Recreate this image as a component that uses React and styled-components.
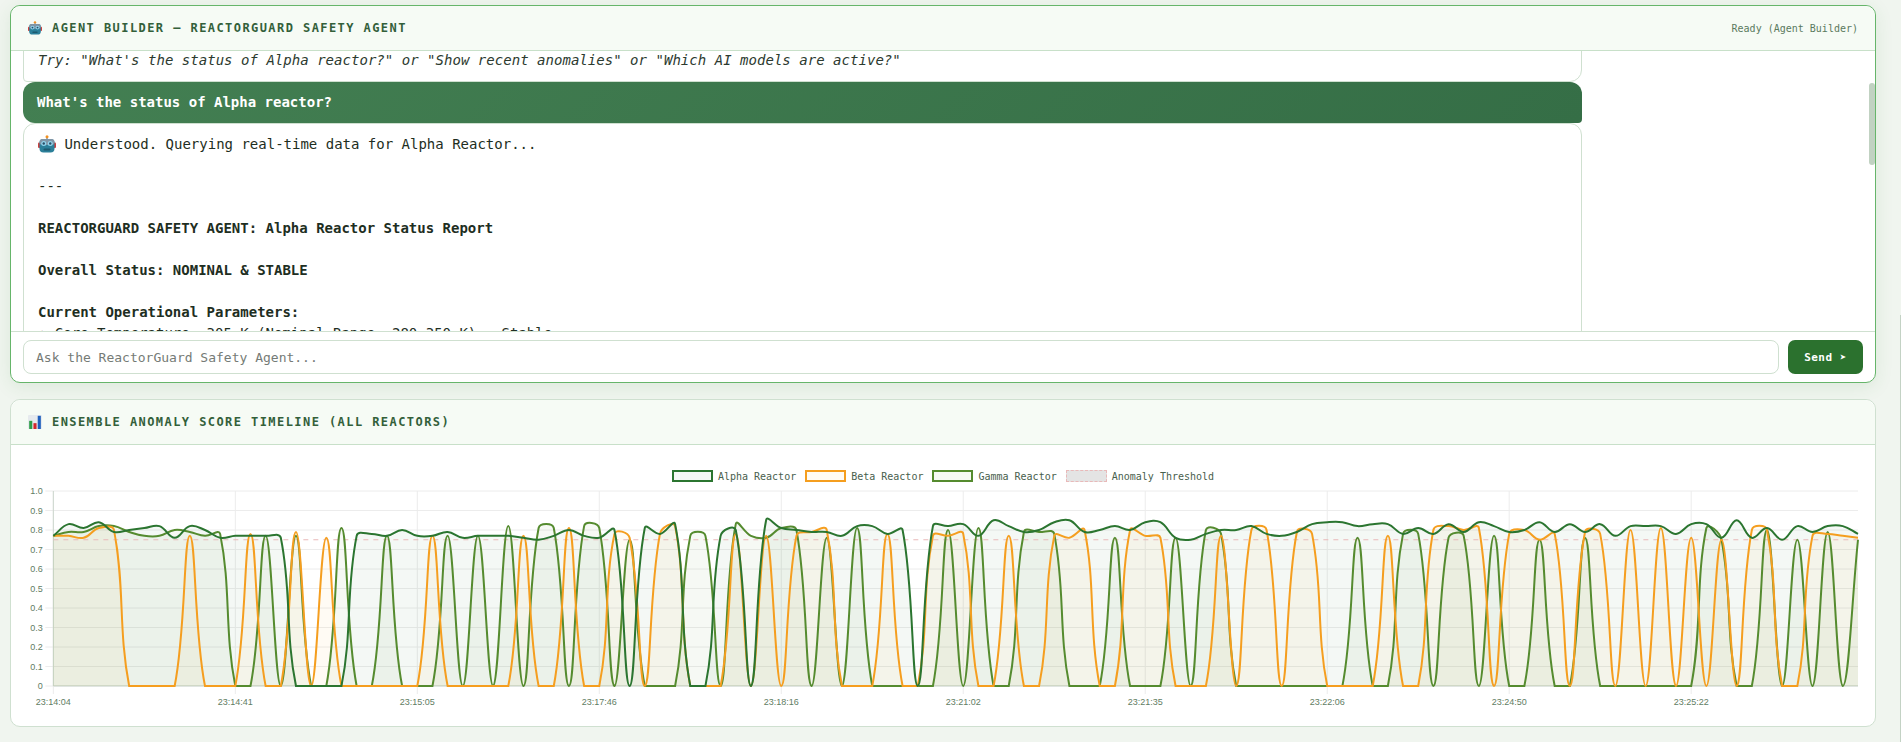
import React, { useLayoutEffect, useRef } from "react";
import styled, { createGlobalStyle } from "styled-components";

const MONO = '"DejaVu Sans Mono", "Liberation Mono", monospace';

const GlobalStyle = createGlobalStyle`
  html, body {
    margin: 0;
    height: 100%;
    overflow: hidden;
    background: #f0f5ef;
    font-family: ${MONO};
  }
  * {
    box-sizing: border-box;
  }
`;

const Page = styled.div`
  display: flex;
  flex-direction: column;
  gap: 16px;
  height: 742px;
  padding: 5px 25px 0 10px;
`;

const Panel = styled.section`
  display: flex;
  flex-direction: column;
  position: relative;
  background: #fff;
  border: 1px solid ${({ $active }) => ($active ? "#66b56a" : "#cfe0d0")};
  border-radius: 10px;
  overflow: hidden;
  box-shadow: ${({ $active }) => ($active ? "0 4px 18px rgba(46, 125, 50, 0.1)" : "none")};
`;

const AgentPanel = styled(Panel)`
  height: 378px;
  overflow: visible;
`;

const PanelHeader = styled.header`
  display: flex;
  align-items: center;
  justify-content: space-between;
  flex: none;
  height: 45px;
  padding: 0 17px;
  background: #f6fbf5;
  border-bottom: 1px solid #c8e0c9;
  border-radius: 10px 10px 0 0;
`;

const PanelTitle = styled.h2`
  display: flex;
  align-items: center;
  gap: 10px;
  margin: 0;
  color: #33603a;
  font-size: 12px;
  font-weight: 700;
  letter-spacing: 1.43px;
  text-transform: uppercase;
`;

const Status = styled.span`
  color: #5a7a5e;
  font-size: 10px;
`;

const ChatViewport = styled.div`
  flex: none;
  height: 280px;
  padding: 0 12px;
  overflow: hidden;
`;

const Bubble = styled.div`
  max-width: 1559px;
  padding: 10px 14px;
  font-size: 14px;
  line-height: 21px;
  white-space: pre-wrap;
`;

const AgentBubble = styled(Bubble)`
  background: #fff;
  color: #1e2e22;
  border: 1px solid #cfe0d0;
  border-radius: 12px 12px 12px 4px;
`;

const UserBubble = styled(Bubble)`
  background: linear-gradient(135deg, #437f52, #356e46);
  color: #fff;
  border-radius: 12px 12px 4px 12px;
  font-weight: 700;
`;

const Hint = styled.em`
  color: #2c3a2f;
  letter-spacing: 0.03px;
`;

const Emoji = styled.svg`
  display: inline-block;
  vertical-align: -4px;
  flex: none;
`;

const ScrollThumb = styled.div`
  position: absolute;
  top: 77px;
  right: 0;
  width: 6px;
  height: 82px;
  background: #c1d2c2;
  border-radius: 3px;
`;

const Composer = styled.form`
  display: flex;
  flex: 1;
  align-items: center;
  gap: 9px;
  padding: 0 12px;
  border-top: 1px solid #cfe0d0;
`;

const ChatInput = styled.input`
  flex: 1;
  height: 34px;
  padding: 0 12px;
  border: 1px solid #cfe0d0;
  border-radius: 8px;
  background: #fff;
  font-family: inherit;
  font-size: 13px;
  &::placeholder {
    color: #757b76;
  }
`;

const SendButton = styled.button`
  flex: none;
  width: 75px;
  height: 34px;
  border: 0;
  border-radius: 7px;
  background: #2b712e;
  color: #fff;
  font-family: inherit;
  font-size: 11px;
  font-weight: 700;
  letter-spacing: 0.5px;
`;

const ChartPanel = styled(Panel)`
  height: 328px;
`;

const ChartBody = styled.div`
  display: flex;
  flex-direction: column;
  padding-top: 25px;
`;

const Legend = styled.div`
  display: flex;
  justify-content: center;
  gap: 9px;
  height: 12px;
  margin-bottom: 4px;
`;

const LegendItem = styled.div`
  display: flex;
  align-items: center;
  gap: 5px;
  color: #48604d;
  font-size: 10px;
`;

const LegendBox = styled.span`
  width: 41px;
  height: 12px;
  border: ${({ $dashed }) => ($dashed ? "1px dashed" : "2px solid")} ${({ $line }) => $line};
  background: ${({ $fill }) => $fill};
`;

const PageScrollbar = styled.div`
  position: fixed;
  top: 315px;
  right: 0;
  bottom: 0;
  width: 1px;
  background: #c3d2c4;
`;

const PLOT = { left: 53.33, right: 1858, top: 491, bottom: 686 };
const STEP = (PLOT.right - PLOT.left) / 119;

const ALPHA = [
  0.77, 0.83, 0.81, 0.84, 0.79, 0.8, 0.81, 0.82, 0.76, 0.82, 0.8, 0.76, 0.77, 0.77, 0.77, 0.76, 0, 0, 0, 0,
  0.77, 0.78, 0.77, 0.8, 0.77, 0.77, 0.79, 0.76, 0.77, 0.77, 0.77, 0.76, 0.75, 0.77, 0.8, 0.77, 0.76, 0.8, 0, 0.81,
  0.78, 0.83, 0, 0, 0.77, 0.8, 0, 0.85, 0.81, 0.8, 0.79, 0.79, 0.77, 0.82, 0.82, 0.78, 0.8, 0, 0.82, 0.82,
  0.83, 0.77, 0.85, 0.82, 0.79, 0.8, 0.84, 0.85, 0.79, 0.8, 0.82, 0.8, 0.84, 0.84, 0.76, 0.75, 0.78, 0.8, 0.8, 0.82,
  0.78, 0.77, 0.79, 0.83, 0.84, 0.84, 0.82, 0.83, 0.83, 0.78, 0.81, 0.78, 0.83, 0.79, 0.84, 0.82, 0.79, 0.8, 0.84, 0.79,
  0.83, 0.79, 0.83, 0.77, 0.82, 0.82, 0.82, 0.78, 0.83, 0.83, 0.76, 0.85, 0.76, 0.81, 0.75, 0.82, 0.79, 0.82, 0.82, 0.78,
];

const BETA = [
  0.77, 0.77, 0.76, 0.81, 0.8, 0, 0, 0, 0, 0.77, 0, 0, 0, 0.78, 0, 0, 0.79, 0, 0.76, 0,
  0, 0, 0, 0, 0, 0.77, 0, 0, 0, 0, 0, 0.77, 0, 0, 0.81, 0, 0, 0.78, 0.76, 0,
  0.78, 0.82, 0, 0, 0, 0.78, 0, 0.77, 0, 0.77, 0.79, 0.8, 0, 0, 0, 0.78, 0, 0, 0.77, 0.77,
  0.78, 0, 0, 0.77, 0, 0, 0.77, 0.76, 0.8, 0, 0, 0.8, 0.77, 0.76, 0, 0, 0, 0.77, 0, 0.8,
  0.8, 0, 0.79, 0.78, 0, 0, 0, 0, 0.77, 0, 0, 0.8, 0.82, 0.8, 0.81, 0, 0.78, 0.8, 0.75, 0.78,
  0, 0.79, 0.78, 0, 0.8, 0, 0.81, 0, 0.76, 0, 0.75, 0, 0.8, 0.8, 0, 0, 0.77, 0.78, 0.77, 0.76,
];

const GAMMA = [
  0.77, 0.79, 0.79, 0.82, 0.82, 0.79, 0.77, 0.77, 0.8, 0.79, 0.77, 0.78, 0, 0, 0.77, 0, 0.77, 0, 0, 0.81,
  0, 0, 0.77, 0, 0, 0, 0.77, 0, 0.77, 0, 0.82, 0, 0.81, 0.81, 0, 0.82, 0.81, 0, 0.75, 0,
  0, 0, 0.77, 0.77, 0, 0.83, 0.77, 0.76, 0.81, 0.8, 0, 0.76, 0, 0.81, 0, 0, 0, 0, 0, 0.8,
  0, 0.81, 0, 0, 0.79, 0.79, 0.78, 0, 0, 0, 0.76, 0, 0, 0, 0.76, 0, 0.8, 0.78, 0, 0,
  0, 0, 0, 0, 0, 0, 0.76, 0, 0, 0.78, 0.78, 0, 0.76, 0.77, 0, 0.77, 0, 0, 0.75, 0,
  0, 0.76, 0, 0, 0, 0, 0, 0, 0, 0.81, 0.75, 0, 0, 0.8, 0, 0.75, 0, 0.79, 0, 0.75,
];

const SERIES = [
  { name: "Gamma", data: GAMMA, line: "#558b2f", fill: "rgba(85, 139, 47, 0.05)" },
  { name: "Beta", data: BETA, line: "#f59e1f", fill: "rgba(249, 168, 37, 0.05)" },
  { name: "Alpha", data: ALPHA, line: "#2b7530", fill: "rgba(46, 125, 50, 0.05)" },
];

const LEGEND = [
  { label: "Alpha Reactor", line: "#2b7530", fill: "rgba(46, 125, 50, 0.05)" },
  { label: "Beta Reactor", line: "#f59e1f", fill: "rgba(249, 168, 37, 0.05)" },
  { label: "Gamma Reactor", line: "#558b2f", fill: "rgba(85, 139, 47, 0.05)" },
  { label: "Anomaly Threshold", line: "#e9b9b9", fill: "#e4e4e4", dashed: true },
];

const X_LABELS = [
  "23:14:04", "23:14:41", "23:15:05", "23:17:46", "23:18:16", "23:21:02",
  "23:21:35", "23:22:06", "23:24:50", "23:25:22",
];

const xAt = (i) => PLOT.left + STEP * i;
const yAt = (v) => PLOT.bottom - v * (PLOT.bottom - PLOT.top);
const clampY = (y) => Math.min(PLOT.bottom, Math.max(PLOT.top, y));

// same bezier spline the chart libraries use, tension 0.4
const splinePath = (data) => {
  const pts = data.map((v, i) => ({ x: xAt(i), y: yAt(v) }));
  const ctrl = pts.map((cur, i) => {
    const prev = pts[i - 1] || cur;
    const next = pts[i + 1] || cur;
    const d01 = Math.hypot(cur.x - prev.x, cur.y - prev.y);
    const d12 = Math.hypot(next.x - cur.x, next.y - cur.y);
    const total = d01 + d12 || 1;
    const fa = (0.4 * d01) / total;
    const fb = (0.4 * d12) / total;
    return {
      inX: cur.x - fa * (next.x - prev.x),
      inY: clampY(cur.y - fa * (next.y - prev.y)),
      outX: cur.x + fb * (next.x - prev.x),
      outY: clampY(cur.y + fb * (next.y - prev.y)),
    };
  });
  let d = `M${pts[0].x} ${pts[0].y}`;
  for (let i = 1; i < pts.length; i++) {
    const a = ctrl[i - 1];
    const b = ctrl[i];
    d += `C${a.outX.toFixed(2)} ${a.outY.toFixed(2)} ${b.inX.toFixed(2)} ${b.inY.toFixed(2)} ${pts[i].x.toFixed(2)} ${pts[i].y.toFixed(2)}`;
  }
  return d;
};

const RobotIcon = ({ size }) => (
  <Emoji width={size} height={size} viewBox="0 0 36 36" aria-hidden="true">
    <rect x="16.5" y="3" width="3" height="6" fill="#8a94a0" />
    <circle cx="18" cy="3.5" r="3" fill="#f19020" />
    <rect x="0" y="15" width="5" height="11" rx="2" fill="#c9403f" />
    <rect x="31" y="15" width="5" height="11" rx="2" fill="#c9403f" />
    <rect x="3" y="8" width="30" height="27" rx="8" fill="#2b7f99" />
    <rect x="3" y="8" width="30" height="12" rx="6" fill="#7f95a6" />
    <circle cx="11.5" cy="17" r="5" fill="#8fd4ec" />
    <circle cx="24.5" cy="17" r="5" fill="#8fd4ec" />
    <circle cx="11.5" cy="17" r="2.4" fill="#2a4d66" />
    <circle cx="24.5" cy="17" r="2.4" fill="#2a4d66" />
    <rect x="11" y="27" width="14" height="4" rx="2" fill="#1d5a70" />
  </Emoji>
);

const BarsIcon = ({ size }) => (
  <Emoji width={size} height={size} viewBox="0 0 36 36" aria-hidden="true">
    <rect x="0" y="0" width="36" height="36" rx="2" fill="#e6eaee" />
    <rect x="3" y="15" width="8" height="21" fill="#2f9e4a" />
    <rect x="14" y="21" width="8" height="15" fill="#d3262c" />
    <rect x="25" y="2" width="8" height="34" fill="#1f5fbd" />
  </Emoji>
);

const TimelineChart = () => {
  const gridColor = "#ececec";
  return (
    <svg width="1864" height="225" viewBox="11 486 1864 225" role="img" aria-label="Ensemble anomaly score timeline">
      {Array.from({ length: 11 }, (_, i) => (
        <line key={i} x1={PLOT.left - 8} x2={PLOT.right} y1={yAt(i / 10)} y2={yAt(i / 10)} stroke={gridColor} />
      ))}
      {X_LABELS.map((_, i) => (
        <line key={i} x1={xAt(i * 12)} x2={xAt(i * 12)} y1={PLOT.top} y2={PLOT.bottom + 8} stroke={gridColor} />
      ))}
      <line x1={PLOT.left} x2={PLOT.left} y1={PLOT.top} y2={PLOT.bottom} stroke="#ccd6cd" />
      <line x1={PLOT.left} x2={PLOT.right} y1={PLOT.bottom} y2={PLOT.bottom} stroke="#ccd6cd" />

      {Array.from({ length: 11 }, (_, i) => (
        <text
          key={i}
          x={PLOT.left - 10.5}
          y={yAt(i / 10) + 3.2}
          textAnchor="end"
          fontFamily='"Liberation Sans", Arial, sans-serif'
          fontSize="9"
          fill="#5f7d63"
        >
          {i === 0 ? "0" : i === 10 ? "1.0" : (i / 10).toFixed(1)}
        </text>
      ))}
      {X_LABELS.map((label, i) => (
        <text
          key={label}
          x={xAt(i * 12)}
          y={705}
          textAnchor="middle"
          fontFamily='"Liberation Sans", Arial, sans-serif'
          fontSize="9"
          fill="#5f7d63"
        >
          {label}
        </text>
      ))}

      {SERIES.map((s) => (
        <path
          key={s.name}
          d={`${splinePath(s.data)}L${PLOT.right} ${PLOT.bottom}L${PLOT.left} ${PLOT.bottom}Z`}
          fill={s.fill}
        />
      ))}
      <line
        x1={PLOT.left}
        x2={PLOT.right}
        y1={yAt(0.75)}
        y2={yAt(0.75)}
        stroke="#e9b9b9"
        strokeDasharray="5 5"
      />
      {SERIES.map((s) => (
        <path key={s.name} d={splinePath(s.data)} fill="none" stroke={s.line} strokeWidth="2" />
      ))}
    </svg>
  );
};

const App = () => {
  const chatRef = useRef(null);

  useLayoutEffect(() => {
    chatRef.current.scrollTop = 12;
  }, []);

  return (
    <>
      <GlobalStyle />
      <Page>
        <AgentPanel $active>
          <PanelHeader>
            <PanelTitle>
              <RobotIcon size={14} />
              Agent Builder — ReactorGuard Safety Agent
            </PanelTitle>
            <Status>Ready (Agent Builder)</Status>
          </PanelHeader>
          <ChatViewport ref={chatRef}>
            <AgentBubble>
              <Hint>Try: "What's the status of Alpha reactor?" or "Show recent anomalies" or "Which AI models are active?"</Hint>
            </AgentBubble>
            <UserBubble>What's the status of Alpha reactor?</UserBubble>
            <AgentBubble>
              <RobotIcon size={18} /> Understood. Querying real-time data for Alpha Reactor...{"\n\n"}---{"\n\n"}
              <strong>REACTORGUARD SAFETY AGENT: Alpha Reactor Status Report</strong>{"\n\n"}
              <strong>Overall Status: NOMINAL &amp; STABLE</strong>{"\n\n"}
              <strong>Current Operational Parameters:</strong>{"\n"}
              • Core Temperature: 305 K (Nominal Range: 280-350 K) - Stable
            </AgentBubble>
          </ChatViewport>
          <ScrollThumb />
          <Composer onSubmit={(e) => e.preventDefault()}>
            <ChatInput placeholder="Ask the ReactorGuard Safety Agent..." />
            <SendButton type="submit">Send ➤</SendButton>
          </Composer>
        </AgentPanel>

        <ChartPanel>
          <PanelHeader>
            <PanelTitle>
              <BarsIcon size={14} />
              Ensemble Anomaly Score Timeline (All Reactors)
            </PanelTitle>
          </PanelHeader>
          <ChartBody>
            <Legend>
              {LEGEND.map((item) => (
                <LegendItem key={item.label}>
                  <LegendBox $line={item.line} $fill={item.fill} $dashed={item.dashed} />
                  {item.label}
                </LegendItem>
              ))}
            </Legend>
            <TimelineChart />
          </ChartBody>
        </ChartPanel>
      </Page>
      <PageScrollbar />
    </>
  );
};

export default App;
